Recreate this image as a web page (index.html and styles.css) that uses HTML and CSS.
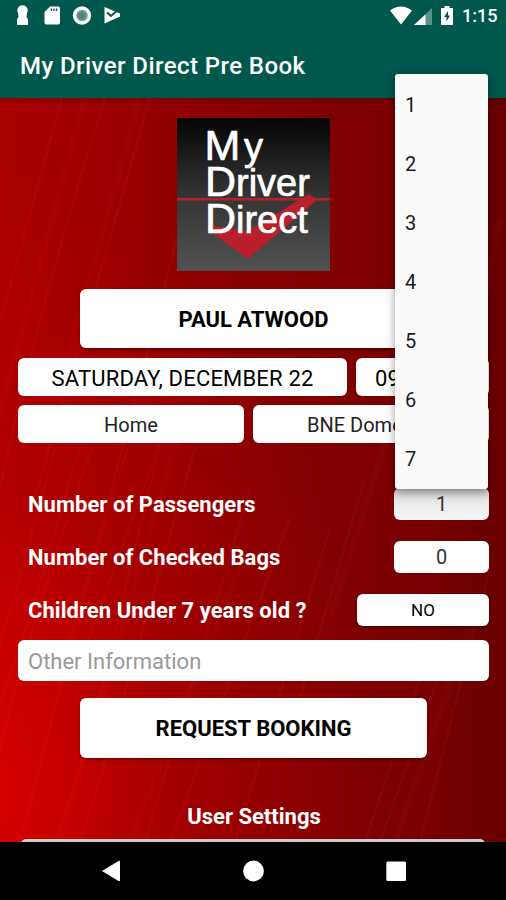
FILE: index.html
```html
<!DOCTYPE html>
<html lang="en">
<head>
  <meta charset="UTF-8">
  <title>My Driver Direct Pre Book</title>
  <meta name="viewport" content="width=device-width, initial-scale=1.0">
  <link rel="stylesheet" href="styles.css">
</head>
<body>
  <header>
    <div class="status-bar">
      <svg class="status-left" width="110" height="22" viewBox="0 0 110 22" fill="#fff">
        <path d="M8 1.500Q11.500 -1 15 1.500Q18 4.500 16 8L15.500 12L17 14.500V20H6V14.500L7.500 12L7 8Q5 4.500 8 1.500Z"/>
        <path d="M39 1.500H47Q49 1.500 49 3.500V17.500Q49 19.500 47 19.500H35.500Q33.500 19.500 33.500 17.500V7Z"/>
        <path d="M40.500 3.500V6M43 3.500V6M45.500 3.500V6" stroke="#00574b" stroke-width="1.300"/>
        <circle cx="71" cy="10.500" r="9.200"/>
        <circle cx="71" cy="10.500" r="5.700" fill="#00574b" opacity=".6"/>
        <circle cx="71" cy="10.500" r="3.300" fill="#00574b" opacity=".3"/>
        <path d="M93.500 2L109 8.500V11.500L93.500 18.500Z"/>
        <path d="M96 7.500L100 11L108.500 3.500" fill="none" stroke="#00574b" stroke-width="2"/>
      </svg>
      <div class="status-right">
        <svg width="66" height="22" viewBox="0 0 66 22" fill="#fff">
          <path d="M3 5.500Q14 -2.500 25 5.500L14 19.500Z"/>
          <path d="M45 3V20H27Z" opacity=".35"/>
          <path d="M38.500 9.500V20H27Z"/>
          <path d="M57.500 1H62.500V3H66V20H54V3H57.500Z"/>
          <path d="M61 6L57 12H59.500V16.500L63 10.500H61Z" fill="#00574b"/>
        </svg>
        <span class="clock">1:15</span>
      </div>
    </div>
    <h1>My Driver Direct Pre Book</h1>
  </header>

  <main>
    <svg class="streaks" viewBox="0 0 506 744" fill="none" stroke="#ff3030">
      <g stroke-width="2.500" opacity=".09">
        <path d="M62 0L-10 260M105 0C70 110 30 250 0 390M150 0L35 400M92 350C60 440 22 560 -5 670M190 90L20 744M165 330L82 560"/>
        <path d="M160 345L90 640L55 744M195 350L112 640L80 744M250 390L145 744M290 420L170 744M330 430L235 744M365 380L300 600"/>
        <path d="M80 350C55 430 20 560 -8 625M55 350C35 425 14 500 -4 560M128 350L60 570M490 470L420 744M445 560L380 744M420 580L365 744"/>
      </g>
      <g stroke-width="7" opacity=".05">
        <path d="M85 0L-10 350M140 0L60 290M180 330L60 744M235 480L130 744M480 500L395 744M390 330L330 520M500 120L460 330"/>
      </g>
    </svg>

    <svg class="logo" viewBox="0 0 153 153">
      <defs>
        <linearGradient id="logoTop" x2="0" y2="1"><stop stop-color="#050505"/><stop offset="1" stop-color="#373737"/></linearGradient>
        <linearGradient id="logoBottom" x2="0" y2="1"><stop stop-color="#363636"/><stop offset="1" stop-color="#505050"/></linearGradient>
      </defs>
      <rect width="153" height="82" fill="url(#logoTop)"/>
      <rect y="82" width="153" height="71" fill="url(#logoBottom)"/>
      <rect y="80" width="153" height="2.600" fill="#b5202b"/>
      <path d="M30 111L36 108L71 113L132 76L140 82L71 141Z" fill="#ba1f2c"/>
      <g class="logo-text">
        <text y="42"><tspan class="cap" x="27.500">M</tspan><tspan x="67">y</tspan></text>
        <text y="77.500"><tspan class="cap" x="28">D</tspan><tspan x="59">river</tspan></text>
        <text y="115"><tspan class="cap" x="28">D</tspan><tspan x="59">irect</tspan></text>
      </g>
    </svg>

    <button class="big-btn">PAUL ATWOOD</button>

    <div class="row date-row">
      <button class="date-btn">SATURDAY, DECEMBER 22</button>
      <button class="time-btn">09:00 AM</button>
    </div>
    <div class="row place-row">
      <button class="from-btn">Home</button>
      <button class="to-btn">BNE Domestic</button>
    </div>

    <div class="option-row first">
      <span>Number of Passengers</span>
      <div class="select">
        <button class="small-btn">1</button>
        <ul class="dropdown">
          <li>1</li>
          <li>2</li>
          <li>3</li>
          <li>4</li>
          <li>5</li>
          <li>6</li>
          <li>7</li>
        </ul>
      </div>
    </div>
    <div class="option-row">
      <span>Number of Checked Bags</span>
      <button class="small-btn">0</button>
    </div>
    <div class="option-row">
      <span>Children Under 7 years old ?</span>
      <button class="small-btn toggle-btn">NO</button>
    </div>

    <input class="other" type="text" placeholder="Other Information">

    <button class="big-btn request-btn">REQUEST BOOKING</button>

    <h2>User Settings</h2>
    <div class="settings"></div>
  </main>

  <nav>
    <svg width="506" height="58" viewBox="0 0 506 58" fill="#fff">
      <path d="M102 29L118.500 19Q120 18.300 120 19.800V38.300Q120 39.800 118.500 39Z"/>
      <circle cx="253.500" cy="29" r="10.400"/>
      <rect x="386.300" y="19.500" width="19.700" height="19.500" rx="1.500"/>
    </svg>
  </nav>
</body>
</html>
```
FILE: styles.css
```css
* {
  box-sizing: border-box;
}
body {
  margin: 0;
  width: 506px;
  height: 900px;
  overflow: hidden;
  display: flex;
  flex-direction: column;
  font-family: Roboto, sans-serif;
  background-color: #000;
}
header {
  height: 98px;
  background-color: #00574b;
  color: white;
}
.status-bar {
  display: flex;
  justify-content: space-between;
  height: 32px;
  padding: 5px 9px 0 11px;
}
.status-right {
  display: flex;
  gap: 9px;
}
.clock {
  font-size: 18px;
  font-weight: 500;
  line-height: 22px;
  width: 35px;
  white-space: nowrap;
}
h1 {
  margin: 0;
  padding-left: 20px;
  font-size: 24px;
  font-weight: 500;
  letter-spacing: 0.43px;
  line-height: 68px;
}
main {
  position: relative;
  height: 744px;
  padding: 20px 17px 0 18px;
  display: flex;
  flex-direction: column;
  background:
    linear-gradient(to bottom, rgba(40, 0, 0, 0.25), rgba(40, 0, 0, 0) 8px),
    radial-gradient(ellipse 400px 620px at -30px 690px, rgba(225, 0, 0, 0.9), rgba(185, 0, 0, 0.45) 50%, rgba(145, 0, 0, 0)),
    linear-gradient(to right, #ac0000, #8a0000 45%, #780000 85%, #680000);
}
.streaks {
  position: absolute;
  top: 0;
  left: 0;
  width: 506px;
  height: 744px;
}
main > :not(.streaks) {
  position: relative;
  flex-shrink: 0;
}
.logo {
  width: 153px;
  height: 153px;
  margin-left: 159px;
}
.logo-text {
  font-family: "Liberation Sans", Arial, sans-serif;
  font-size: 38px;
  fill: white;
  stroke: white;
  stroke-width: 0.7px;
}
.logo-text .cap {
  font-size: 43px;
}
button {
  border: none;
  border-radius: 6px;
  padding: 2px 0 0;
  font-family: inherit;
  background-color: white;
  color: black;
  white-space: nowrap;
  overflow: hidden;
}
.big-btn {
  width: 347px;
  height: 59px;
  margin: 18px 0 0 62px;
  font-size: 22px;
  font-weight: 700;
  box-shadow: 0 2px 3px rgba(0, 0, 0, 0.35);
}
.row {
  display: flex;
  gap: 9px;
  margin-top: 9px;
}
.row button {
  height: 38px;
}
.date-row {
  margin-top: 10px;
}
.date-row button {
  font-size: 22px;
  letter-spacing: 0.18px;
}
.date-btn {
  width: 329px;
}
.time-btn {
  flex: 1;
}
.place-row button {
  font-size: 20px;
  color: #222;
}
.from-btn {
  width: 226px;
}
.to-btn {
  flex: 1;
}
.option-row {
  display: flex;
  justify-content: space-between;
  height: 32px;
  margin-top: 21px;
  padding-left: 10px;
  color: white;
  font-size: 22px;
  font-weight: 700;
  letter-spacing: 0.04px;
  line-height: 33px;
}
.option-row.first {
  margin-top: 45px;
  z-index: 5;
}
.select {
  position: relative;
  height: 32px;
}
.small-btn {
  width: 95px;
  height: 32px;
  padding-top: 0;
  font-size: 20px;
  color: #333;
}
.select .small-btn {
  display: block;
  background: linear-gradient(to bottom, #cfcfcf, #e6e6e6 35%, #f8f8f8);
}
.toggle-btn {
  width: 132px;
  font-size: 17px;
  color: black;
  box-shadow: 0 2px 3px rgba(0, 0, 0, 0.35);
}
.dropdown {
  position: absolute;
  left: 1px;
  bottom: 31px;
  width: 93px;
  height: 415px;
  margin: 0;
  padding: 1px 0 0 10px;
  list-style: none;
  background-color: #fafafa;
  border-radius: 3px;
  box-shadow: 0 3px 10px rgba(0, 0, 0, 0.4);
  color: #1c1c1c;
  font-size: 20px;
  font-weight: 400;
}
.dropdown li {
  height: 59px;
  line-height: 61px;
}
.other {
  height: 41px;
  margin-top: 14px;
  padding: 1px 10px 0;
  border: none;
  border-radius: 6px;
  font-family: inherit;
  font-size: 22px;
  background-color: white;
}
.other::placeholder {
  color: #999;
}
.request-btn {
  height: 60px;
  margin-top: 17px;
  padding-top: 1px;
}
h2 {
  margin: 43px 0 0;
  padding-left: 1px;
  color: white;
  font-size: 22px;
  font-weight: 700;
  line-height: 32px;
  text-align: center;
}
.settings {
  height: 20px;
  margin: 6px 4px 0 3px;
  border-radius: 5px;
  background-color: #ccc;
}
nav {
  position: relative;
  height: 58px;
  background-color: #000;
}
nav svg {
  display: block;
}
```
